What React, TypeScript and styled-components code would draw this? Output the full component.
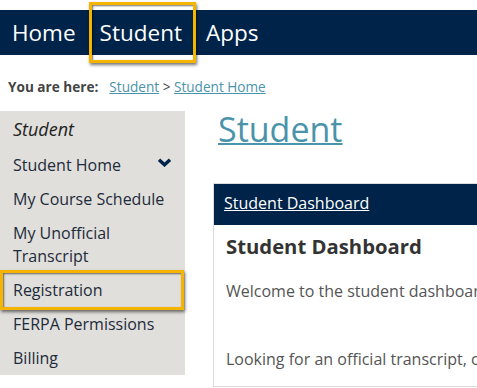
import React from "react";
import styled, { createGlobalStyle, css } from "styled-components";

const NAVY = "#00234a";
const GOLD = "#f5b400";
const LINK = "#4a93ab";

const GlobalStyle = createGlobalStyle`
	html, body {
		margin: 0;
		padding: 0;
		overflow: hidden;
		background: #fff;
		font-family: "Open Sans", "Liberation Sans", sans-serif;
	}
`;

const callout = css`
	&::after {
		content: "";
		position: absolute;
		border: 3px solid ${GOLD};
		box-shadow: 1px 2px 3px rgba(0, 0, 0, 0.55),
			inset 1px 1px 2px rgba(0, 0, 0, 0.55);
		pointer-events: none;
	}
`;

const PageSC = styled.div`
	padding-top: 10px;
	width: 477px;
`;

const NavBarSC = styled.nav`
	display: flex;
	align-items: center;
	height: 45px;
	background: ${NAVY};
`;

const NavItemSC = styled.a<{ $active?: boolean }>`
	position: relative;
	padding: 0 12px;
	color: #fff;
	font-size: 22.5px;
	line-height: 45px;
	text-decoration: none;
	${({ $active }) =>
		$active &&
		css`
			${callout}
			&::after {
				top: -8px;
				bottom: -8px;
				left: 1px;
				right: -2px;
			}
		`}
`;

const CrumbsSC = styled.div`
	margin: 23px 0 15px;
	padding-left: 8px;
	font-size: 13.6px;
	line-height: 18px;
	color: #444;
	white-space: nowrap;
`;

const CrumbLabelSC = styled.b`
	margin-right: 11px;
`;

const CrumbLinkSC = styled.a`
	color: ${LINK};
	text-decoration: underline;
`;

const BodySC = styled.div`
	display: flex;
	align-items: flex-start;
`;

const SideNavSC = styled.aside`
	flex: 0 0 185px;
	background: #e1dfdc;
`;

const SideTitleSC = styled.div`
	padding: 5px 13px 6px;
	font-size: 18px;
	font-style: italic;
	line-height: 26px;
	color: #222;
`;

const SideItemSC = styled.a<{ $active?: boolean }>`
	position: relative;
	display: flex;
	justify-content: space-between;
	align-items: center;
	padding: 5.5px 13px 5.5px 13px;
	font-size: 16px;
	line-height: 23px;
	color: #1d2b3a;
	text-decoration: none;
	${({ $active }) =>
		$active &&
		css`
			${callout}
			&::after {
				top: -3px;
				bottom: -3px;
				left: 0;
				right: 1px;
			}
		`}
`;

const ChevronSC = styled.svg`
	width: 15px;
	height: 9px;
	margin-top: -6px;
	color: ${NAVY};
`;

const Chevron = () => (
	<ChevronSC viewBox="0 0 15 9">
		<polyline
			points="2,1.8 7.5,6.8 13,1.8"
			fill="none"
			stroke="currentColor"
			strokeWidth="3.4"
			strokeLinecap="butt"
			strokeLinejoin="miter"
		/>
	</ChevronSC>
);

const MainSC = styled.main`
	flex: 0 0 auto;
	margin-left: 28px;
`;

const PageTitleSC = styled.h1`
	margin: 0 0 36px;
	padding-left: 5px;
	font-size: 34px;
	font-weight: 400;
	line-height: 36px;
	a {
		color: ${LINK};
		text-decoration: underline;
		text-decoration-thickness: 2px;
	}
`;

const CardSC = styled.section`
	width: 330px;
	border: 1px solid #dcdcdc;
	background: #fff;
`;

const CardHeaderSC = styled.header`
	padding: 8px 10px 11px;
	background: ${NAVY};
	font-size: 16px;
	line-height: 22px;
	a {
		color: #fff;
		text-decoration: underline;
	}
`;

const CardBodySC = styled.div`
	padding: 8px 12px 16px;
	white-space: nowrap;
`;

const CardTitleSC = styled.h2`
	margin: 0 0 20px;
	font-size: 20.3px;
	font-weight: 700;
	line-height: 27px;
	color: #333;
`;

const TextSC = styled.p<{ $gap?: number }>`
	margin: 0 0 ${({ $gap }) => $gap ?? 0}px;
	font-size: 16px;
	line-height: 22px;
	color: #555;
`;

const sideLinks = [
	"My Course Schedule",
	"My Unofficial Transcript",
	"Registration",
	"FERPA Permissions",
	"Billing",
];

const App = () => {
	return (
		<PageSC>
			<GlobalStyle />
			<NavBarSC>
				<NavItemSC href="#">Home</NavItemSC>
				<NavItemSC href="#" $active>
					Student
				</NavItemSC>
				<NavItemSC href="#">Apps</NavItemSC>
			</NavBarSC>
			<CrumbsSC>
				<CrumbLabelSC>You are here:</CrumbLabelSC>
				<CrumbLinkSC href="#">Student</CrumbLinkSC> &gt;{" "}
				<CrumbLinkSC href="#">Student Home</CrumbLinkSC>
			</CrumbsSC>
			<BodySC>
				<SideNavSC>
					<SideTitleSC>Student</SideTitleSC>
					<SideItemSC href="#">
						Student Home
						<Chevron />
					</SideItemSC>
					{sideLinks.map((label) => (
						<SideItemSC
							key={label}
							href="#"
							$active={label === "Registration"}
						>
							{label}
						</SideItemSC>
					))}
				</SideNavSC>
				<MainSC>
					<PageTitleSC>
						<a href="#">Student</a>
					</PageTitleSC>
					<CardSC>
						<CardHeaderSC>
							<a href="#">Student Dashboard</a>
						</CardHeaderSC>
						<CardBodySC>
							<CardTitleSC>Student Dashboard</CardTitleSC>
							<TextSC $gap={46}>Welcome to the student dashboard.</TextSC>
							<TextSC>
								Looking for an official transcript, click here.
							</TextSC>
						</CardBodySC>
					</CardSC>
				</MainSC>
			</BodySC>
		</PageSC>
	);
};

export default App;
